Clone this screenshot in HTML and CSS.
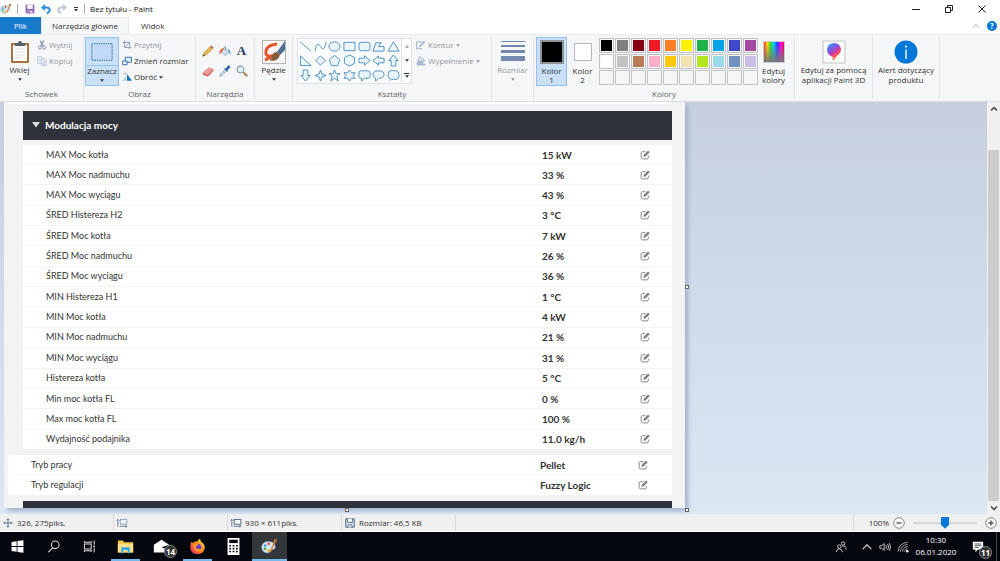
FILE: index.html
```
<!DOCTYPE html>
<html lang="pl">
<head>
<meta charset="UTF-8" />
<meta name="viewport" content="width=device-width, initial-scale=1" />
<title>Bez tytułu - Paint</title>
<link rel="stylesheet" href="styles.css">
</head>
<body>

<!-- Shared icons -->
<svg class="defs" aria-hidden="true">
  <symbol id="edit" viewBox="0 0 18 18">
    <path d="M10 3H4.500Q2 3 2 5.500v8Q2 16 4.500 16h8q2.500 0 2.500-2.500V10" fill="none" stroke="#8a8a8a" stroke-width="1.800"/>
    <path d="M6 12l.8-3.500 7.700-7.500 3 3-7.700 7.500z" fill="#808080"/>
  </symbol>
  <symbol id="palette" viewBox="0 0 24 24">
    <path d="M10 5C4 5 1 9 1 13.500 1 18 5 21.500 10 21c3-.3 2-3.500 4-4.500s6 1 6-4C20 8 16 5 10 5z" fill="#d4e6f2" stroke="#7ea6bf"/>
    <circle cx="6" cy="10.500" r="1.800" fill="#3c9be0"/><circle cx="11" cy="8" r="1.800" fill="#e2462f"/>
    <circle cx="5.500" cy="15" r="1.800" fill="#46a947"/><circle cx="10" cy="17.500" r="1.800" fill="#efb928"/>
    <path d="M13 20L19 6" stroke="#d9822b" stroke-width="2"/>
    <path d="M17.500 6l1-4 4-1-.5 4-2.500 2.500z" fill="#b87b3d"/>
  </symbol>
  <symbol id="size" viewBox="0 0 20 16">
    <path d="M3 14V2M1 4l2-2 2 2" fill="none" stroke="#47607f" stroke-width="1.300"/>
    <rect x="7" y="2" width="11" height="8" fill="#fff" stroke="#47607f" stroke-width="1.500"/>
    <path d="M6 13.500h12M16 11.500l2 2-2 2" fill="none" stroke="#47607f" stroke-width="1.300"/>
  </symbol>
  <symbol id="down" viewBox="0 0 6 4"><path d="M0 0h6L3 3.800z" fill="currentColor"/></symbol>
</svg>

<header class="titlebar">
  <svg class="app-icon"><use href="#palette"/></svg>
  <span class="bar"></span>
  <button class="quick" aria-label="Zapisz"><svg viewBox="0 0 16 16"><path d="M1 1h14v14H1z" fill="#8a63ad"/><path d="M3.500 1h9v7h-9z" fill="#f6f1fa"/><path d="M4 10.500h8V15H4z" fill="#dccdea"/><path d="M5.500 11.500h2V15h-2z" fill="#6b4690"/></svg></button>
  <button class="quick" aria-label="Cofnij"><svg viewBox="0 0 16 16"><path d="M3 5.500h6q5 0 5 4.500-.5 3.500-5 4.500" fill="none" stroke="#2e8fd8" stroke-width="3"/><path d="M0 5.500L6.500 0v11z" fill="#2e8fd8"/></svg></button>
  <button class="quick" aria-label="Ponów"><svg viewBox="0 0 16 16"><path d="M13 5.500H7q-5 0-5 4.500.5 3.500 5 4.500" fill="none" stroke="#bcc8d6" stroke-width="3"/><path d="M16 5.500L9.500 0v11z" fill="#bcc8d6"/></svg></button>
  <button class="quick-menu" aria-label="Dostosuj"><svg viewBox="0 0 8 8"><path d="M2 2h4v1H2zM2 4h4L4 6.500z" fill="#333"/></svg></button>
  <span class="bar"></span>
  <h1>Bez tytułu - Paint</h1>
  <div class="window-buttons">
    <button aria-label="Minimalizuj"><svg viewBox="0 0 12 12"><path d="M2 6.500h8" stroke="#222"/></svg></button>
    <button aria-label="Przywróć"><svg viewBox="0 0 12 12"><path d="M2.500 4.500h5v5h-5zM4.500 4V2.500h5v5H8" fill="none" stroke="#222"/></svg></button>
    <button aria-label="Zamknij"><svg viewBox="0 0 12 12"><path d="M2.500 2.500l7 7m0-7l-7 7" stroke="#222"/></svg></button>
  </div>
</header>

<nav class="tabs">
  <button class="tab file">Plik</button>
  <button class="tab active">Narzędzia główne</button>
  <button class="tab">Widok</button>
  <button class="collapse" aria-label="Zwiń wstążkę"><svg viewBox="0 0 8 8"><path d="M1 5.500l3-3 3 3" fill="none" stroke="#aaa"/></svg></button>
  <button class="help" aria-label="Pomoc">?</button>
</nav>

<section class="ribbon">
  <div class="group clipboard">
    <div class="tools">
      <button class="big">
        <svg viewBox="0 0 22 24"><rect x="2" y="3" width="18" height="20" rx="1" fill="#a9713b"/><path d="M4 5h14v16H4z" fill="#fff"/><path d="M6 9h10M6 12h10M6 15h10M6 18h7" stroke="#d5dce5"/><path d="M6 6V3h3q0-2 2-2t2 2h3v3z" fill="#555f69"/></svg>
        Wklej<svg class="arrow"><use href="#down"/></svg>
      </button>
      <div class="stack">
        <button class="small off"><svg viewBox="0 0 16 16"><path d="M5 1l5 9M11 1L6 10" stroke="#8494ad" stroke-width="2"/><g fill="none" stroke="#8494ad" stroke-width="1.600"><circle cx="4.500" cy="12" r="2.500"/><circle cx="11.500" cy="12" r="2.500"/></g></svg>Wytnij</button>
        <button class="small off"><svg viewBox="0 0 16 16"><g fill="#eef2f9" stroke="#a3b2cc"><path d="M1 1h6l2 2v9H1z"/><path d="M7 4.500h6l2 2V15H7z"/></g><path d="M3 5h3M3 7h3M9 9h4M9 11h4M9 13h4" stroke="#a3b2cc"/></svg>Kopiuj</button>
      </div>
    </div>
    <h2>Schowek</h2>
  </div>

  <div class="group image">
    <div class="tools">
      <button class="big chosen">
        <svg viewBox="0 0 26 24"><rect x="2" y="3" width="22" height="18" fill="#bfdaf6" stroke="#2d5f93" stroke-dasharray="1.500 1"/></svg>
        <span>Zaznacz</span><svg class="arrow"><use href="#down"/></svg>
      </button>
      <div class="stack">
        <button class="small off"><svg viewBox="0 0 16 16"><path d="M4 1v11h11M1 4h11v11M4 12L14 2" fill="none" stroke="#8fa0ba" stroke-width="1.500"/></svg>Przytnij</button>
        <button class="small"><svg viewBox="0 0 16 16"><path d="M5 2h10v8H5z" fill="#e6f2fd" stroke="#2c6ba5" stroke-width="1.500"/><path d="M1 8h7v6H1z" fill="#fff" stroke="#2c6ba5" stroke-width="1.500"/></svg>Zmień rozmiar</button>
        <button class="small"><svg viewBox="0 0 16 16"><path d="M8 3v11h8z" fill="#1475bd"/><path d="M7 6v8H0z" fill="#b3cce2"/><path d="M2 4q3-4 6-1" fill="none" stroke="#668"/></svg>Obróć<svg class="arrow"><use href="#down"/></svg></button>
      </div>
    </div>
    <h2>Obraz</h2>
  </div>

  <div class="group instruments">
    <div class="tools">
      <div class="tool-grid">
        <button aria-label="Ołówek"><svg viewBox="0 0 16 16"><path d="M1 15l1.500-4.500L11 2l3 3-8.500 8.500z" fill="#e8b64c" stroke="#a17728" stroke-width=".7"/><path d="M11 2l1.500-1.500 3 3L14 5z" fill="#b8604b"/><path d="M1 15l.8-2.500 1.700 1.700z" fill="#333"/></svg></button>
        <button aria-label="Wypełnienie kolorem"><svg viewBox="0 0 16 16"><path d="M7 3l6 5-4 6-6-5z" fill="#d8e5f0" stroke="#6f9cc4"/><path d="M7 3.500q-5 1-6.500 5 0 4 1 4 1-3 3-4z" fill="#e0764c"/><path d="M8.500 8V1" stroke="#6f88a3"/><path d="M12 5q4 2 3 8-2-1-2-5z" fill="#4b8fc9"/></svg></button>
        <button class="letter" aria-label="Tekst">A</button>
        <button aria-label="Gumka"><svg viewBox="0 0 16 16"><path d="M1 10l8-7 6 2-7 8z" fill="#ef9b98"/><path d="M1 10l7 3v2.500L1 13zM8 13l7-8v3l-7 7.500z" fill="#d26462"/></svg></button>
        <button aria-label="Selektor kolorów"><svg viewBox="0 0 16 16"><path d="M1 15l1-3 6-6 2 2-6 6z" fill="#cfe2f1" stroke="#5d7e9c" stroke-width=".8"/><path d="M7 5l1-1 1 1 3-4q3-1 3 2l-4 4 1 1-1 1z" fill="#235f96"/></svg></button>
        <button aria-label="Lupa"><svg viewBox="0 0 16 16"><circle cx="6" cy="6" r="4.500" fill="#deeffa" stroke="#8798a8" stroke-width="1.400"/><path d="M9.500 9.500L15 15" stroke="#a47a4a" stroke-width="2.500"/></svg></button>
      </div>
    </div>
    <h2>Narzędzia</h2>
  </div>

  <div class="group brushes">
    <div class="tools">
      <button class="big">
        <svg viewBox="0 0 24 24"><rect x=".5" y=".5" width="23" height="23" fill="#f4f4f4" stroke="#b5b5b5"/><path d="M15 4Q5 5 4 11t5 5q-3 3-6 4" fill="none" stroke="#e3562b" stroke-width="3"/><path d="M23 1v9l-5 5-3-3z" fill="#4d6d8e"/><path d="M18 15l-3-3q-4 0-5 4-1 3-3 4 8 3 11-5z" fill="#865b39"/></svg>
        Pędzle<svg class="arrow"><use href="#down"/></svg>
      </button>
    </div>
  </div>

  <div class="group shapes">
    <div class="tools">
      <div class="gallery">
        <div class="shape-grid">
          <button aria-label="Linia"><svg viewBox="0 0 14 14"><path d="M1 2l12 10"/></svg></button>
          <button aria-label="Krzywa"><svg viewBox="0 0 14 14"><path d="M1 12Q3 0 7 7t6-5" fill="none"/></svg></button>
          <button aria-label="Owal"><svg viewBox="0 0 14 14"><ellipse cx="7" cy="7" rx="6" ry="5"/></svg></button>
          <button aria-label="Prostokąt"><svg viewBox="0 0 14 14"><path d="M1 2.500h12v9H1z"/></svg></button>
          <button aria-label="Zaokrąglony prostokąt"><svg viewBox="0 0 14 14"><rect x="1" y="2.500" width="12" height="9" rx="2.500"/></svg></button>
          <button aria-label="Wielokąt"><svg viewBox="0 0 14 14"><path d="M1 12l3-9h6L7 7h6v5z"/></svg></button>
          <button aria-label="Trójkąt"><svg viewBox="0 0 14 14"><path d="M1 12L7 2l6 10z"/></svg></button>
          <button aria-label="Trójkąt prostokątny"><svg viewBox="0 0 14 14"><path d="M1.500 12.500V2l11.500 10.500z"/></svg></button>
          <button aria-label="Romb"><svg viewBox="0 0 14 14"><path d="M7 2l5 5-5 5-5-5z"/></svg></button>
          <button aria-label="Pięciokąt"><svg viewBox="0 0 14 14"><path d="M7 1.500L12.500 6l-2 6.500h-7L1.500 6z"/></svg></button>
          <button aria-label="Sześciokąt"><svg viewBox="0 0 14 14"><path d="M7 1l5.500 3v6L7 13l-5.500-3V4z"/></svg></button>
          <button aria-label="Strzałka w prawo"><svg viewBox="0 0 14 14"><path d="M1 4.500h6V2l6 5-6 5V9.500H1z"/></svg></button>
          <button aria-label="Strzałka w lewo"><svg viewBox="0 0 14 14"><path d="M13 4.500H7V2L1 7l6 5V9.500h6z"/></svg></button>
          <button aria-label="Strzałka w górę"><svg viewBox="0 0 14 14"><path d="M4.500 13V7H2l5-6 5 6H9.500v6z"/></svg></button>
          <button aria-label="Strzałka w dół"><svg viewBox="0 0 14 14"><path d="M4.500 1v6H2l5 6 5-6H9.500V1z"/></svg></button>
          <button aria-label="Gwiazda czteroramienna"><svg viewBox="0 0 14 14"><path d="M7 1l1.500 4.500L13 7 8.500 8.500 7 13 5.500 8.500 1 7l4.500-1.500z"/></svg></button>
          <button aria-label="Gwiazda pięcioramienna"><svg viewBox="0 0 14 14"><path d="M7 1l1.700 4H13L9.500 8l1.500 5-4-3-4 3 1.500-5L1 5h4.300z"/></svg></button>
          <button aria-label="Gwiazda sześcioramienna"><svg viewBox="0 0 14 14"><path d="M7 1l2 3h4l-2 3 2 3H9l-2 3-2-3H1l2-3-2-3h4z"/></svg></button>
          <button aria-label="Objaśnienie prostokątne"><svg viewBox="0 0 14 14"><path d="M3 2h8q2 0 2 2v4q0 2-2 2H7l-3 3v-3H3q-2 0-2-2V4q0-2 2-2z"/></svg></button>
          <button aria-label="Objaśnienie owalne"><svg viewBox="0 0 14 14"><path d="M3.500 9.500Q1 8 1 6q0-4 6-4t6 4-6 4l-3 3z"/></svg></button>
          <button aria-label="Objaśnienie chmurka"><svg viewBox="0 0 14 14"><path d="M4 2q1.500-1 3 0 2-1 3.500.5Q13 3 12.500 5 14 7 12.500 9q0 2-2.500 2-1.500 1-3 0-2 1-3.500-.5Q1 10 1.500 8 .5 6.500 1.500 5 1 2.500 4 2zM3 13h1"/></svg></button>
        </div>
        <div class="gallery-scroll">
          <button class="off" aria-label="W górę"><svg class="arrow flip"><use href="#down"/></svg></button>
          <button aria-label="W dół"><svg class="arrow"><use href="#down"/></svg></button>
          <button class="more" aria-label="Więcej"><svg class="arrow"><use href="#down"/></svg></button>
        </div>
      </div>
      <div class="stack">
        <button class="small off"><svg viewBox="0 0 16 16"><path d="M1 3h11M1 3v11h9" fill="none" stroke="#9fb0c6" stroke-width="1.500"/><path d="M4 12l1-3 8-8 2 2-8 8z" fill="#a9bad0"/></svg>Kontur<svg class="arrow"><use href="#down"/></svg></button>
        <button class="small off"><svg viewBox="0 0 16 16"><path d="M6 1l8 6-5 6-6-6z" fill="#e4ebf4" stroke="#9fb0c6" stroke-width="1.500"/><path d="M3 7h10l-4 5H15v3H1v-4z" fill="#a9bad0"/></svg>Wypełnienie<svg class="arrow"><use href="#down"/></svg></button>
      </div>
    </div>
    <h2>Kształty</h2>
  </div>

  <div class="group thickness">
    <div class="tools">
      <button class="big off">
        <svg viewBox="0 0 24 24"><path d="M0 1h24v1H0zM0 5h24v2H0zM0 10h24v3H0zM0 16h24v5H0z" fill="#7489b0"/></svg>
        Rozmiar<svg class="arrow"><use href="#down"/></svg>
      </button>
    </div>
  </div>

  <div class="group colors">
    <div class="tools">
      <button class="color chosen"><i class="chip black"></i>Kolor<br>1</button>
      <button class="color"><i class="chip back"></i>Kolor<br>2</button>
      <div class="swatches">
        <button class="black" aria-label="Czarny"></button>
        <button class="gray" aria-label="Szary 50%"></button>
        <button class="dark-red" aria-label="Ciemnoczerwony"></button>
        <button class="red" aria-label="Czerwony"></button>
        <button class="orange" aria-label="Pomarańczowy"></button>
        <button class="yellow" aria-label="Żółty"></button>
        <button class="green" aria-label="Zielony"></button>
        <button class="turquoise" aria-label="Turkusowy"></button>
        <button class="indigo" aria-label="Indygo"></button>
        <button class="purple" aria-label="Purpurowy"></button>
        <button class="white" aria-label="Biały"></button>
        <button class="light-gray" aria-label="Szary 25%"></button>
        <button class="brown" aria-label="Brązowy"></button>
        <button class="rose" aria-label="Różany"></button>
        <button class="gold" aria-label="Złoty"></button>
        <button class="cream" aria-label="Jasnożółty"></button>
        <button class="lime" aria-label="Limona"></button>
        <button class="light-blue" aria-label="Jasnoturkusowy"></button>
        <button class="blue-gray" aria-label="Niebieskoszary"></button>
        <button class="lavender" aria-label="Lawendowy"></button>
        <button aria-label="Własny 1"></button>
        <button aria-label="Własny 2"></button>
        <button aria-label="Własny 3"></button>
        <button aria-label="Własny 4"></button>
        <button aria-label="Własny 5"></button>
        <button aria-label="Własny 6"></button>
        <button aria-label="Własny 7"></button>
        <button aria-label="Własny 8"></button>
        <button aria-label="Własny 9"></button>
        <button aria-label="Własny 10"></button>
      </div>
      <button class="color edit-colors"><i class="chip rainbow"></i>Edytuj<br>kolory</button>
    </div>
    <h2>Kolory</h2>
  </div>

  <div class="group paint3d">
    <div class="tools">
      <button class="big">
        <svg viewBox="0 0 24 24">
          <linearGradient id="drop" x1="0" y1="0" x2=".6" y2="1"><stop offset="0" stop-color="#19b9f1"/><stop offset=".45" stop-color="#8b4de0"/><stop offset=".7" stop-color="#ed3c78"/><stop offset="1" stop-color="#ffae1a"/></linearGradient>
          <path d="M1 1h22v22H1z" fill="#fafafa" stroke="#c4c4c4"/><path d="M12 3q6 0 7 6 0 4-4 7l-4 5q-1-2 0-4-6-2-6-8 1-6 7-6z" fill="url(#drop)"/>
        </svg>
        Edytuj za pomocą<br>aplikacji Paint 3D
      </button>
    </div>
  </div>

  <div class="group notice">
    <div class="tools">
      <button class="big">
        <svg viewBox="0 0 24 24"><circle cx="12" cy="12" r="11.500" fill="#0078d7"/><path d="M11.300 9.500h1.400V19h-1.400z" fill="#fff"/><circle cx="12" cy="6.500" r="1.100" fill="#fff"/></svg>
        Alert dotyczący<br>produktu
      </button>
    </div>
  </div>
</section>

<main class="workspace">
  <div class="canvas-area">
    <div class="canvas">
      <div class="previous"></div>
      <h3 class="section-head"><svg viewBox="0 0 8 6"><path d="M0 0h8L4 5.500z" fill="#ddd"/></svg>Modulacja mocy</h3>
      <div class="params">
        <table>
          <tr><th>MAX Moc kotła</th><td>15 kW</td><td><button aria-label="Edytuj"><svg><use href="#edit"/></svg></button></td></tr>
          <tr><th>MAX Moc nadmuchu</th><td>33 %</td><td><button aria-label="Edytuj"><svg><use href="#edit"/></svg></button></td></tr>
          <tr><th>MAX Moc wyciągu</th><td>43 %</td><td><button aria-label="Edytuj"><svg><use href="#edit"/></svg></button></td></tr>
          <tr><th>ŚRED Histereza H2</th><td>3 °C</td><td><button aria-label="Edytuj"><svg><use href="#edit"/></svg></button></td></tr>
          <tr><th>ŚRED Moc kotła</th><td>7 kW</td><td><button aria-label="Edytuj"><svg><use href="#edit"/></svg></button></td></tr>
          <tr><th>ŚRED Moc nadmuchu</th><td>26 %</td><td><button aria-label="Edytuj"><svg><use href="#edit"/></svg></button></td></tr>
          <tr><th>ŚRED Moc wyciągu</th><td>36 %</td><td><button aria-label="Edytuj"><svg><use href="#edit"/></svg></button></td></tr>
          <tr><th>MIN Histereza H1</th><td>1 °C</td><td><button aria-label="Edytuj"><svg><use href="#edit"/></svg></button></td></tr>
          <tr><th>MIN Moc kotła</th><td>4 kW</td><td><button aria-label="Edytuj"><svg><use href="#edit"/></svg></button></td></tr>
          <tr><th>MIN Moc nadmuchu</th><td>21 %</td><td><button aria-label="Edytuj"><svg><use href="#edit"/></svg></button></td></tr>
          <tr><th>MIN Moc wyciągu</th><td>31 %</td><td><button aria-label="Edytuj"><svg><use href="#edit"/></svg></button></td></tr>
          <tr><th>Histereza kotła</th><td>5 °C</td><td><button aria-label="Edytuj"><svg><use href="#edit"/></svg></button></td></tr>
          <tr><th>Min moc kotła FL</th><td>0 %</td><td><button aria-label="Edytuj"><svg><use href="#edit"/></svg></button></td></tr>
          <tr><th>Max moc kotła FL</th><td>100 %</td><td><button aria-label="Edytuj"><svg><use href="#edit"/></svg></button></td></tr>
          <tr><th>Wydajność podajnika</th><td>11.0 kg/h</td><td><button aria-label="Edytuj"><svg><use href="#edit"/></svg></button></td></tr>
        </table>
      </div>
      <div class="modes">
        <table>
          <tr><th>Tryb pracy</th><td>Pellet</td><td><button aria-label="Edytuj"><svg><use href="#edit"/></svg></button></td></tr>
          <tr><th>Tryb regulacji</th><td>Fuzzy Logic</td><td><button aria-label="Edytuj"><svg><use href="#edit"/></svg></button></td></tr>
        </table>
      </div>
      <div class="next-head"></div>
      <i class="handle right"></i>
      <i class="handle bottom"></i>
      <i class="handle corner"></i>
    </div>
  </div>
  <div class="scrollbar">
    <button aria-label="Przewiń w górę"><svg viewBox="0 0 8 8"><path d="M1 5.500l3-3 3 3" fill="none" stroke="#444" stroke-width="1.500"/></svg></button>
    <div class="track"><div class="thumb"></div></div>
    <button aria-label="Przewiń w dół"><svg viewBox="0 0 8 8"><path d="M1 2.500l3 3 3-3" fill="none" stroke="#444" stroke-width="1.500"/></svg></button>
  </div>
</main>

<footer class="status">
  <span class="cell"><svg viewBox="0 0 20 16"><path d="M10 1v14M3 8h14M8 3l2-2 2 2M8 13l2 2 2-2M5 6L3 8l2 2M15 6l2 2-2 2" fill="none" stroke="#47607f" stroke-width="1.400"/></svg>326, 275piks.</span>
  <span class="cell"><svg viewBox="0 0 20 16"><path d="M3 14V2M1 4l2-2 2 2M6 13.500h12M16 11.500l2 2-2 2" fill="none" stroke="#47607f" stroke-width="1.300"/><rect x="7" y="2" width="11" height="8" fill="none" stroke="#47607f" stroke-width="1.500" stroke-dasharray="2 1.500"/></svg></span>
  <span class="cell"><svg><use href="#size"/></svg>930 × 611piks.</span>
  <span class="cell"><svg viewBox="0 0 20 16"><path d="M3 1h14v14H3z" fill="#dbe5f0" stroke="#47607f" stroke-width="1.600"/><path d="M6 1v6h8V1M7 15v-4h6v4" fill="#fff" stroke="#47607f" stroke-width="1.400"/></svg>Rozmiar: 46,5 KB</span>
  <div class="zoom">
    <label for="zoom">100%</label>
    <button aria-label="Pomniejsz"><svg viewBox="0 0 12 12"><circle cx="6" cy="6" r="5.300" fill="#f8f8f8" stroke="#888"/><path d="M3.500 6h5" stroke="#555" stroke-width="1.400"/></svg></button>
    <input type="range" id="zoom" min="0" max="100" value="50">
    <button aria-label="Powiększ"><svg viewBox="0 0 12 12"><circle cx="6" cy="6" r="5.300" fill="#f8f8f8" stroke="#888"/><path d="M3.500 6h5M6 3.500v5" stroke="#555" stroke-width="1.400"/></svg></button>
  </div>
</footer>

<div class="taskbar">
  <button aria-label="Start"><svg viewBox="0 0 20 20"><path d="M3 4.700l6-.9v5.700H3zM10 3.600l7-1v6.900h-7zM3 10.500h6v5.700l-6-.9zM10 10.500h7v6.900l-7-1z" fill="#fff"/></svg></button>
  <button aria-label="Szukaj"><svg viewBox="0 0 20 20"><circle cx="12" cy="8" r="4.500" fill="none" stroke="#ddd" stroke-width="1.200"/><path d="M9 11.500L4 16.500" stroke="#ddd" stroke-width="1.300"/></svg></button>
  <button aria-label="Widok zadań"><svg viewBox="0 0 20 20"><path d="M4 7h8v6H4zM4 3.500V5h8V3.500M4 16.500V15h8v1.500M15.500 3v5M15.500 12v5" fill="none" stroke="#ddd" stroke-width="1.200"/><path d="M14.500 9h2v2h-2z" fill="#ddd"/></svg></button>
  <button class="open" aria-label="Eksplorator plików"><svg viewBox="0 0 20 20"><path d="M1 3h6l1.500 2H19v12H1z" fill="#f4c64e"/><path d="M1 7h18v10H1z" fill="#ffe08a"/><path d="M5 18v-7h10v7h-2.500v-4h-5v4z" fill="#38a9e4"/></svg></button>
  <button aria-label="Poczta"><svg viewBox="0 0 20 20"><path d="M1 8l9-6 9 6v9H1z" fill="#fff"/><path d="M1 8l9 3 9-3-4 5-5-2" fill="#05080e"/></svg><b class="badge">14</b></button>
  <button class="open" aria-label="Firefox"><svg viewBox="0 0 20 20">
    <linearGradient id="fox" x1="1" y1="0" x2="0" y2="1"><stop offset="0" stop-color="#fff14a"/><stop offset=".45" stop-color="#ff8a1f"/><stop offset="1" stop-color="#f0246b"/></linearGradient>
    <path d="M3 4l1.500 2Q7 3 10 4q1-2.500 3-3 0 3 3 5 3 2 2.500 6Q17 19 10 19T1.500 12Q1 7 3 4z" fill="url(#fox)"/><circle cx="10" cy="11" r="4.300" fill="#6a3bd0"/><path d="M5 7q3-1 6 1-1 2-3 2 0 3 4 3 2 0 3-1-1 4-5 4-5-1-5-9z" fill="#ff9522"/></svg></button>
  <button aria-label="Kalkulator"><svg viewBox="0 0 20 20"><path d="M3 0h14v20H3z" fill="#fff"/><path d="M5 2h10v4H5z" fill="#05080e"/><path d="M5 9h10M5 12.500h10M5 16h10" stroke="#05080e" stroke-width="1.800" stroke-dasharray="2 2"/></svg></button>
  <button class="current" aria-label="Paint"><svg><use href="#palette"/></svg></button>
  <div class="tray">
    <button aria-label="Kontakty"><svg viewBox="0 0 14 14"><g fill="none" stroke="#ddd"><circle cx="5" cy="6.500" r="2"/><path d="M1.500 13q0-4 3.500-4t3.500 4"/><circle cx="9.500" cy="3" r="2"/><path d="M8.500 6q4.500-1 4.500 4"/></g></svg></button>
    <button aria-label="Ukryte ikony"><svg viewBox="0 0 14 14"><path d="M2 9.500l5-5 5 5" fill="none" stroke="#ddd" stroke-width="1.300"/></svg></button>
    <button aria-label="Głośność"><svg viewBox="0 0 14 14"><path d="M1 5.500h2L6 3v8L3 8.500H1zM8 5q1.500 2 0 4M10 3.500q2.500 3.500 0 7M12 2.500q3 4.500 0 9" fill="none" stroke="#ddd"/></svg></button>
    <button aria-label="Sieć"><svg viewBox="0 0 14 14"><g fill="none" stroke="#bbb"><path d="M1.500 12.500q0-10 11-11M4 12.500q0-7.500 8.500-8.500M6.500 12.500q0-5 6-6M9 12.500q0-3 3.500-3.500"/></g><circle cx="12" cy="12" r="1.500" fill="#eee"/></svg></button>
    <time datetime="2020-01-06T10:30">10:30<br>06.01.2020</time>
    <button class="messages" aria-label="Centrum akcji"><svg viewBox="0 0 14 14"><path d="M1 1h12v9H7l-3 3v-3H1z" fill="#fff"/><path d="M3 3.500h8M3 5.500h8M3 7.500h5" stroke="#05080e" stroke-width=".8"/></svg><b class="badge">11</b></button>
  </div>
</div>

</body>
</html>
```
FILE: styles.css
```
* {
  box-sizing: border-box;
}
body {
  margin: 0;
  height: 100vh;
  display: flex;
  flex-direction: column;
  overflow: hidden;
  font-family: "Open Sans", "Noto Sans", sans-serif;
  font-size: 8px;
  line-height: 10px;
  color: #333;
  background: #fff;
}
h1, h2, h3 {
  margin: 0;
  font-size: inherit;
  font-weight: normal;
}
button {
  padding: 0;
  border: 0;
  background: none;
  font: inherit;
  color: inherit;
}
svg {
  display: block;
  flex: none;
}
.defs {
  position: absolute;
  width: 0;
  height: 0;
}

/* title bar */
.titlebar {
  display: flex;
  align-items: center;
  height: 17px;
}
.app-icon {
  width: 12px;
  height: 12px;
  margin-right: 5px;
}
.bar {
  width: 1px;
  height: 10px;
  background: #aaa;
}
.titlebar h1 {
  margin-left: 5px;
  color: #111;
}
.quick {
  width: 16px;
}
.quick svg {
  width: 10px;
  height: 10px;
  margin: auto;
}
.bar + .quick {
  margin-left: 4px;
}
.quick-menu {
  margin: 0 4px 0 2px;
}
.quick-menu svg {
  width: 8px;
  height: 8px;
}
.window-buttons {
  display: flex;
  margin-left: auto;
  margin-right: 2px;
}
.window-buttons button {
  width: 33px;
}
.window-buttons svg {
  width: 12px;
  height: 12px;
  margin: auto;
}

/* ribbon tabs */
.tabs {
  display: flex;
  align-items: center;
  height: 17px;
}
.tab {
  height: 17px;
  padding: 0 12px;
}
.tab.file {
  padding: 0 14px;
  background: #1979ca;
  color: #fff;
}
.tab.active {
  padding: 0 10px;
  background: #f5f6f7;
  border: 1px solid #e6e7e8;
  border-bottom: 0;
}
.collapse {
  margin-left: auto;
}
.collapse svg {
  width: 8px;
  height: 8px;
}
.help {
  width: 10px;
  height: 10px;
  margin: 0 3px 0 7px;
  border-radius: 50%;
  background: #0078d7;
  color: #fff;
  font-weight: bold;
}

/* ribbon */
.ribbon {
  display: flex;
  height: 68px;
  padding: 2px 0;
  background: #f5f6f7;
  border-top: 1px solid #e8e9ea;
  border-bottom: 1px solid #dcdddf;
}
.group {
  display: flex;
  flex-direction: column;
  flex: none;
  border-right: 1px solid #e2e3e4;
}
.group h2 {
  text-align: center;
  color: #5f6368;
}
.tools {
  display: flex;
  flex: 1;
}
.clipboard { width: 84px; }
.image { width: 112px; }
.instruments { width: 59px; }
.brushes { width: 38px; }
.shapes { width: 199px; }
.thickness { width: 42px; }
.colors { width: 261px; }
.paint3d { width: 78px; }
.notice { width: 67px; }

.big {
  display: flex;
  flex-direction: column;
  align-items: center;
  height: 49px;
  padding-top: 2px;
  border: 1px solid transparent;
}
.big svg {
  width: 24px;
  height: 24px;
  margin-bottom: 1px;
}
.big .arrow {
  margin-top: 3px;
}
svg.arrow {
  width: 4px;
  height: 3px;
}
.flip {
  transform: rotate(180deg);
}
.off {
  color: #93989f;
}
.clipboard .big {
  width: 35px;
  margin-left: 2px;
}
.image .big {
  width: 34px;
  margin-left: 1px;
}
.big.chosen, .color.chosen {
  background: #c9e0f7;
  border: 1px solid #92c0ef;
}
.big.chosen span {
  align-self: stretch;
  border-top: 1px solid #92c0ef;
}
.brushes .big, .thickness .big, .paint3d .big, .notice .big {
  width: 100%;
}
.stack {
  display: flex;
  flex-direction: column;
}
.small {
  display: flex;
  align-items: center;
  gap: 2px;
  height: 16px;
  white-space: nowrap;
}
.small svg {
  width: 10px;
  height: 10px;
}
.big .arrow, .small .arrow {
  width: 4px;
  height: 3px;
}
.image .stack {
  margin-left: 3px;
}
.tool-grid {
  display: grid;
  grid-template-columns: repeat(3, 17px);
  grid-auto-rows: 20px;
  margin: 4px 0 0 3px;
}
.tool-grid button {
  display: grid;
  place-items: center;
}
.tool-grid svg {
  width: 12px;
  height: 12px;
}
.tool-grid .letter {
  font: bold 13px/16px "Liberation Serif", serif;
  color: #25415f;
}
.gallery {
  display: flex;
  width: 115px;
  height: 46px;
  margin: 1px 4px 0 4px;
  border: 1px solid #dfe2e6;
  background: #fbfcfd;
}
.shape-grid {
  display: grid;
  grid-template-columns: repeat(7, 1fr);
  flex: 1;
}
.shape-grid button {
  display: grid;
  place-items: center;
}
.shape-grid svg {
  width: 13px;
  height: 13px;
  fill: #eaf4fb;
  stroke: #4d8cc0;
  stroke-width: 1;
}
.gallery-scroll {
  display: grid;
  width: 10px;
  border-left: 1px solid #dfe2e6;
}
.gallery-scroll button {
  display: flex;
  flex-direction: column;
  align-items: center;
  justify-content: center;
}
.gallery-scroll .more::before {
  content: "";
  width: 5px;
  height: 1px;
  margin-bottom: 1px;
  background: #333;
}

/* colours */
.color {
  width: 31px;
  height: 49px;
  padding-bottom: 3px;
  border: 1px solid transparent;
  line-height: 9px;
}
.color.chosen {
  margin-left: 2px;
}
.chip {
  display: block;
  width: 24px;
  height: 24px;
  margin: 2px auto;
  border: 2px solid #8f9499;
}
.chip.back {
  width: 18px;
  height: 18px;
  margin: 5px auto;
  background: #fff;
  border: 1px solid #b4b7ba;
}
.chip.rainbow {
  width: 22px;
  height: 22px;
  margin: 3px auto;
  border: 1px solid #ccc;
  background: linear-gradient(transparent 10%, #777), linear-gradient(90deg, #f33, #fd0, #3d3, #0cf, #33f, #f0f, #f03);
}
.swatches {
  display: grid;
  grid-template-columns: repeat(10, 15px);
  grid-auto-rows: 15px;
  gap: 1px;
  margin: 1px 0 0 1px;
}
.swatches button {
  border: 1px solid #c1c3c5;
  box-shadow: inset 0 0 0 1px #f5f6f7;
}
.black { background: #000; }
.gray { background: #7f7f7f; }
.dark-red { background: #880015; }
.red { background: #ed1c24; }
.orange { background: #ff7f27; }
.yellow { background: #fff200; }
.green { background: #22b14c; }
.turquoise { background: #00a2e8; }
.indigo { background: #3f48cc; }
.purple { background: #a349a4; }
.white { background: #fff; }
.light-gray { background: #c3c3c3; }
.brown { background: #b97a57; }
.rose { background: #ffaec9; }
.gold { background: #ffc90e; }
.cream { background: #efe4b0; }
.lime { background: #b5e61d; }
.light-blue { background: #99d9ea; }
.blue-gray { background: #7092be; }
.lavender { background: #c8bfe7; }

/* workspace */
.workspace {
  display: flex;
  flex: 1;
  min-height: 0;
}
.canvas-area {
  display: flex;
  flex: 1;
  padding-bottom: 6px;
  background: linear-gradient(#c5cfe0, #dce7f4);
}
.canvas {
  position: relative;
  display: flex;
  flex-direction: column;
  width: 69%;
  margin-left: 4px;
  padding: 0 13px 0 4px;
  background: #f3f3f3;
  box-shadow: 3px 3px 4px #a5b4cc;
  font-family: Lato, sans-serif;
  font-size: 10px;
  line-height: 12px;
}
.previous {
  height: 2px;
  margin-bottom: 7px;
  background: #fff;
}
.section-head {
  display: flex;
  align-items: center;
  gap: 5px;
  height: 29px;
  margin: 0 0 5px 15px;
  padding: 0 0 1px 9px;
  background: #2f323b;
  color: #fff;
  font-weight: bold;
}
.section-head svg {
  width: 8px;
  height: 6px;
}
.params {
  flex: 1;
  min-height: 0;
  margin-left: 15px;
}
.canvas table {
  width: 100%;
  height: 100%;
  border-collapse: collapse;
  table-layout: fixed;
}
.canvas tr {
  background: #fff;
  border-bottom: 1px solid #f3f3f3;
}
.canvas th {
  padding: 0 0 0 23px;
  text-align: left;
  font-size: 9px;
  font-weight: normal;
}
.canvas td {
  width: 98px;
  padding: 0;
  font-weight: bold;
}
.canvas td:last-child {
  width: 32px;
}
.canvas td button {
  display: block;
}
.canvas td svg {
  width: 10px;
  height: 10px;
}
.modes {
  height: 41px;
  margin: 5px 0;
}
.modes td:last-child {
  width: 34px;
}
.next-head {
  height: 7px;
  margin-left: 15px;
  background: #2f323b;
}
.handle {
  position: absolute;
  width: 4px;
  height: 4px;
  border: 1px solid #666;
  background: #fff;
}
.handle.right {
  left: 100%;
  top: 45%;
}
.handle.bottom {
  left: 50%;
  top: 100%;
}
.handle.corner {
  left: 100%;
  top: 100%;
}
.scrollbar {
  display: flex;
  flex-direction: column;
  width: 13px;
  background: #f0f0f0;
}
.scrollbar button {
  height: 13px;
}
.scrollbar svg {
  width: 8px;
  height: 8px;
  margin: auto;
}
.track {
  display: flex;
  flex: 1;
  align-items: flex-end;
  padding: 0 1px;
}
.thumb {
  width: 100%;
  height: 91%;
  background: #cdcdcd;
}

/* status bar */
.status {
  display: flex;
  height: 18px;
  background: #f0f0f0;
  border-bottom: 1px solid #fff;
}
.cell {
  display: flex;
  align-items: center;
  gap: 3px;
  width: 114px;
  padding-left: 2px;
  border-right: 1px solid #dcdcdc;
}
.cell svg {
  width: 12px;
  height: 10px;
}
.zoom {
  display: flex;
  align-items: center;
  gap: 4px;
  margin-left: auto;
  padding: 0 3px 0 15px;
  border-left: 1px solid #dcdcdc;
}
.zoom svg {
  width: 12px;
  height: 12px;
}
.zoom input {
  appearance: none;
  width: 64px;
  height: 14px;
  margin: 0 4px;
  background: linear-gradient(#d8d8d8, #d8d8d8) center / 100% 2px no-repeat;
}
.zoom input::-webkit-slider-thumb {
  appearance: none;
  width: 8px;
  height: 12px;
  background: #0078d7;
  clip-path: polygon(0 0, 100% 0, 100% 70%, 50% 100%, 0 70%);
}

/* taskbar */
.taskbar {
  display: flex;
  gap: 1px;
  height: 29px;
  background: #05080e;
  color: #fff;
}
.taskbar button {
  position: relative;
  width: 35px;
}
.taskbar svg {
  width: 17px;
  height: 17px;
  margin: auto;
}
.taskbar .open::after, .taskbar .current::after {
  content: "";
  position: absolute;
  left: 3px;
  right: 3px;
  bottom: 0;
  height: 2px;
  background: #76b9ed;
}
.taskbar .current {
  background: #33373c;
}
.taskbar .current::after {
  left: 0;
  right: 0;
}
.badge {
  position: absolute;
  right: 2px;
  bottom: 3px;
  width: 13px;
  height: 13px;
  border: 1px solid #888;
  border-radius: 50%;
  background: #333;
  line-height: 11px;
  text-align: center;
}
.tray {
  display: flex;
  align-items: center;
  margin-left: auto;
  margin-right: 3px;
  border-right: 1px solid #444;
}
.tray button {
  width: 18px;
}
.tray button:first-child {
  width: 34px;
}
.tray svg {
  width: 12px;
  height: 12px;
}
.tray time {
  width: 48px;
  padding-bottom: 1px;
  line-height: 12px;
  text-align: center;
}
.tray .messages {
  width: 36px;
}
.messages .badge {
  right: 4px;
  bottom: -6px;
}
```
